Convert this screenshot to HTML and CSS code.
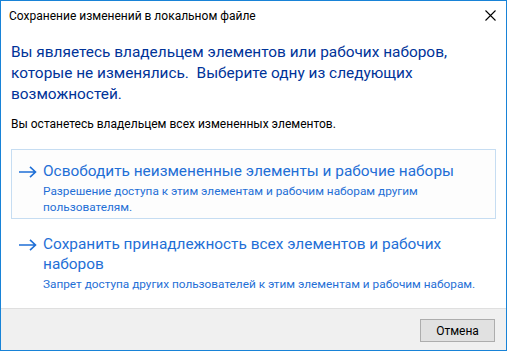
FILE: index.html
```html
<!DOCTYPE html>
<html lang="ru">
<head>
  <meta charset="UTF-8">
  <meta name="viewport" content="width=device-width, initial-scale=1.0">
  <title>Сохранение изменений в локальном файле</title>
  <link rel="stylesheet" href="styles.css">
</head>
<body>
  <div class="window">
    <div class="titlebar">
      <span class="title">Сохранение изменений в локальном файле</span>
      <button class="close" aria-label="Закрыть">
        <svg width="11" height="11" viewBox="0 0 11 11">
          <path d="M0.5 0.5 L10.5 10.5 M10.5 0.5 L0.5 10.5" stroke="#000" stroke-width="1.1" fill="none"/>
        </svg>
      </button>
    </div>

    <div class="content">
      <p class="instruction">Вы являетесь владельцем элементов или рабочих наборов,<br>которые не изменялись.&nbsp; Выберите одну из следующих<br>возможностей.</p>
      <p class="note">Вы останетесь владельцем всех измененных элементов.</p>

      <div class="option hover">
        <svg class="arrow" width="18" height="12" viewBox="0 0 18 12">
          <path d="M0 6 H16.5 M11 0.8 L16.5 6 L11 11.2" stroke="#1f6fd6" stroke-width="1.6" fill="none"/>
        </svg>
        <div class="option-text">
          <div class="option-title">Освободить неизмененные элементы и рабочие наборы</div>
          <div class="option-desc">Разрешение доступа к этим элементам и рабочим наборам другим<br>пользователям.</div>
        </div>
      </div>

      <div class="option">
        <svg class="arrow" width="18" height="12" viewBox="0 0 18 12">
          <path d="M0 6 H16.5 M11 0.8 L16.5 6 L11 11.2" stroke="#1f6fd6" stroke-width="1.6" fill="none"/>
        </svg>
        <div class="option-text">
          <div class="option-title">Сохранить принадлежность всех элементов и рабочих<br>наборов</div>
          <div class="option-desc">Запрет доступа других пользователей к этим элементам и рабочим наборам.</div>
        </div>
      </div>
    </div>

    <div class="footer">
      <button class="btn">Отмена</button>
    </div>
  </div>
</body>
</html>
```

FILE: styles.css
```css
body {
  margin: 0;
  font-family: Roboto, "Noto Sans", sans-serif;
  background: #fff;
}
.window {
  box-sizing: border-box;
  width: 507px;
  height: 351px;
  border: 1px solid #1883d7;
  display: flex;
  flex-direction: column;
}
.titlebar {
  flex: none;
  height: 29px;
  display: flex;
  align-items: center;
  justify-content: space-between;
  padding-left: 8px;
}
.title {
  font-size: 12px;
  color: #000;
  margin-top: 1px;
}
.close {
  width: 32px;
  height: 29px;
  border: 0;
  background: none;
  padding: 0;
  display: flex;
  align-items: center;
  justify-content: center;
}
.content {
  flex: 1;
  min-height: 0;
  overflow: hidden;
  padding: 12px 10px 0 10px;
}
.instruction {
  margin: 0;
  font-size: 15.4px;
  line-height: 21px;
  color: #003399;
  white-space: nowrap;
}
.note {
  margin: 11px 0 0 0;
  font-size: 12px;
  line-height: 16px;
  color: #000;
}
.option {
  margin-top: 17px;
  display: flex;
  align-items: flex-start;
  padding: 11px 8px 3px 7px;
  border: 1px solid transparent;
  white-space: nowrap;
}
.option + .option {
  margin-top: 3px;
}
.option.hover {
  border-color: #c6ddf2;
  background: #fdfdfd;
}
.arrow {
  flex: none;
  margin-top: 5px;
  margin-right: 6px;
}
.option-title {
  font-size: 15.4px;
  line-height: 20px;
  color: #1f6fd6;
}
.option-desc {
  font-size: 11.8px;
  line-height: 16px;
  color: #1f6fd6;
  margin-top: 2px;
}
.footer {
  flex: none;
  height: 42px;
  background: #f0f0f0;
  border-top: 1px solid #dfdfdf;
  display: flex;
  justify-content: flex-end;
  align-items: flex-start;
  padding: 10px 11px 0 0;
  box-sizing: border-box;
}
.btn {
  width: 75px;
  height: 23px;
  font-family: inherit;
  font-size: 12px;
  background: #e1e1e1;
  border: 1px solid #adadad;
  color: #000;
  padding: 0;
}
```
